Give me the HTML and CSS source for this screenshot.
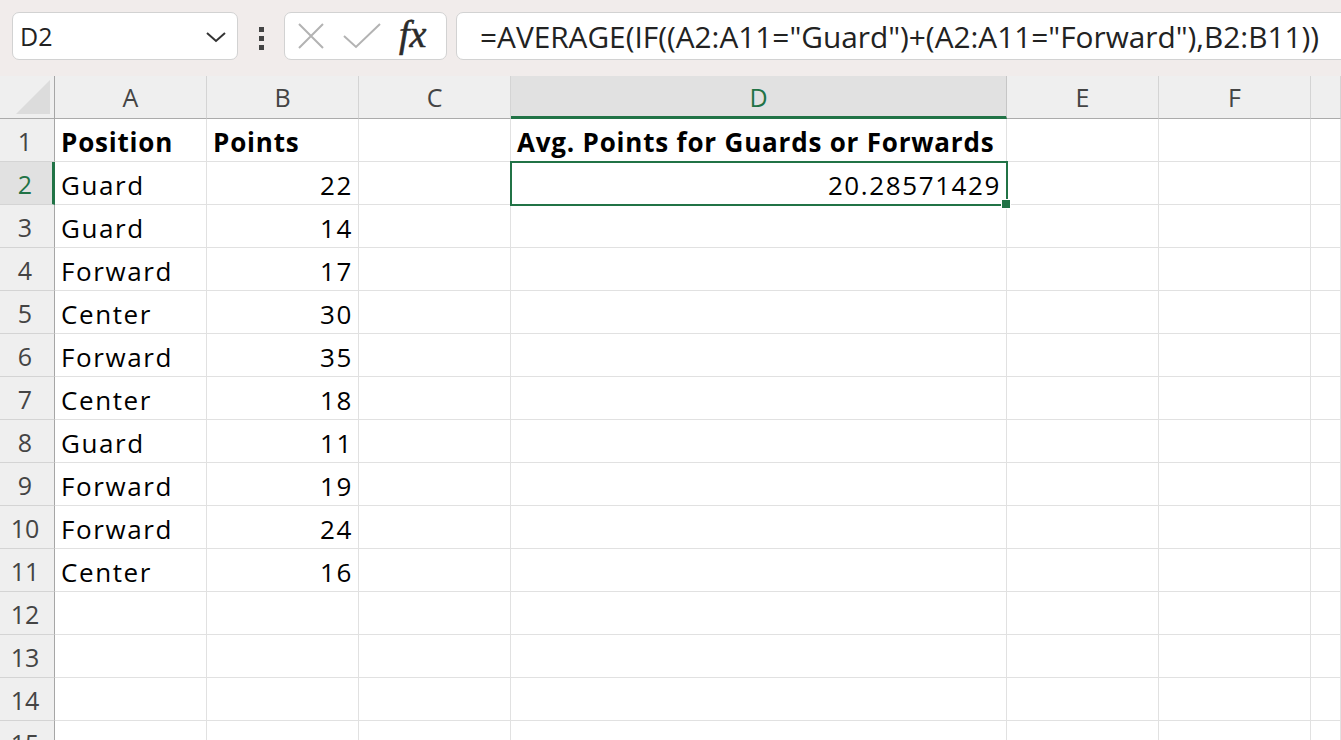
FILE: index.html
```html
<!DOCTYPE html>
<html lang="en">
<head>
    <meta charset="UTF-8">
    <meta name="viewport" content="width=device-width, initial-scale=1.0">
    <title>Book1 - Excel</title>
    <link rel="stylesheet" href="styles.css">
</head>
<body>
    <div class="toolbar">
        <div class="namebox">
            <span>D2</span>
            <svg class="chevron" width="22" height="12" viewBox="0 0 22 12">
                <path d="M2 2 L11 10 L20 2" fill="none" stroke="#333" stroke-width="2"/>
            </svg>
        </div>
        <div class="dots">
            <i></i><i></i><i></i>
        </div>
        <div class="fxbox">
            <svg width="28" height="26" viewBox="0 0 28 26">
                <path d="M2 1 L26 25 M26 1 L2 25" stroke="#b3b3b3" stroke-width="2" fill="none"/>
            </svg>
            <svg width="38" height="26" viewBox="0 0 38 26">
                <path d="M1 13 L13 24 L37 1" stroke="#b3b3b3" stroke-width="2" fill="none"/>
            </svg>
            <span class="fx">fx</span>
        </div>
        <div class="formula">=AVERAGE(IF((A2:A11="Guard")+(A2:A11="Forward"),B2:B11))</div>
    </div>

    <div class="sheet">
        <div class="corner"><span></span></div>
        <div class="colhead">A</div>
        <div class="colhead">B</div>
        <div class="colhead">C</div>
        <div class="colhead active">D</div>
        <div class="colhead">E</div>
        <div class="colhead">F</div>
        <div class="colhead"></div>
    </div>

    <script>
        const rows = [
            ['Position', 'Points', '', 'Avg. Points for Guards or Forwards'],
            ['Guard', 22, '', 20.28571429],
            ['Guard', 14], ['Forward', 17], ['Center', 30], ['Forward', 35],
            ['Center', 18], ['Guard', 11], ['Forward', 19], ['Forward', 24],
            ['Center', 16], [], [], [], []
        ];

        const sheet = document.querySelector('.sheet');

        rows.forEach((row, i) => {
            const head = document.createElement('div');
            head.classList.add('rowhead');
            if (i == 1) head.classList.add('active');
            head.textContent = i + 1;
            sheet.appendChild(head);

            for (let c = 0; c < 7; c++) {
                const cell = document.createElement('div');
                cell.classList.add('cell');
                const v = row[c];
                if (v !== undefined && v !== '') {
                    cell.textContent = v;
                    if (typeof v == 'number') cell.classList.add('num');
                }
                if (i == 0) cell.classList.add('bold');
                if (i == 1 && c == 3) {
                    cell.classList.add('selected');
                    const handle = document.createElement('span');
                    handle.classList.add('handle');
                    cell.appendChild(handle);
                }
                sheet.appendChild(cell);
            }
        });
    </script>
</body>
</html>
```

FILE: styles.css
```css
body {
    margin: 0;
    overflow: hidden;
    font-family: "Open Sans", "Noto Sans", sans-serif;
    color: #000;
}

.toolbar {
    height: 76px;
    background: #f1eceb;
    display: flex;
    align-items: flex-start;
    padding-top: 12px;
    box-sizing: border-box;

    .namebox,
    .fxbox,
    .formula {
        height: 48px;
        box-sizing: border-box;
        background: #fff;
        border: 1px solid #d2d2d2;
        border-radius: 7px;
        display: flex;
        align-items: center;
    }

    .namebox {
        margin-left: 12px;
        width: 226px;
        padding: 0 10px 0 7px;
        justify-content: space-between;
        font-size: 25px;
        color: #222;
    }

    .chevron {
        margin-top: 2px;
    }

    .dots {
        width: 46px;
        display: flex;
        flex-direction: column;
        align-items: center;
        gap: 4px;
        padding-top: 15px;

        i {
            width: 5px;
            height: 5px;
            background: #444;
        }
    }

    .fxbox {
        width: 163px;
        padding: 0 10px 0 12px;
        gap: 20px;

        svg:nth-child(2) {
            margin-left: -2px;
        }
    }

    .fx {
        font-family: "Liberation Serif", serif;
        font-style: italic;
        font-size: 38px;
        color: #2b2b2b;
        margin-left: -2px;
        margin-top: -5px;
        -webkit-text-stroke: 0.6px #2b2b2b;
    }

    .formula {
        margin-left: 9px;
        flex: 1;
        margin-right: -20px;
        padding-left: 23px;
        font-size: 29.8px;
        color: #222;
        white-space: nowrap;
    }
}

.sheet {
    display: grid;
    grid-template-columns: 55px 152px 152px 152px 496px 152px 152px 1fr;
    grid-auto-rows: 43px;

    > div {
        box-sizing: border-box;
        border-right: 1px solid #e1e1e1;
        border-bottom: 1px solid #e1e1e1;
    }

    .corner {
        background: #efefef;
        border-right: 1px solid #a6a6a6;
        border-bottom: 1px solid #ababab;
        position: relative;

        span {
            position: absolute;
            right: 4px;
            bottom: 4px;
            width: 0;
            height: 0;
            border-left: 34px solid transparent;
            border-bottom: 34px solid #dcdcdc;
        }
    }

    .colhead {
        background: #efefef;
        border-bottom: 1px solid #ababab;
        border-right: 1px solid #d4d4d4;
        text-align: center;
        font-size: 25px;
        line-height: 42px;
        color: #444;

        &.active {
            background: #e1e1e1;
            color: #217346;
            border-bottom: 3px solid #217346;
            border-right-color: #c6c6c6;
        }
    }

    .rowhead {
        background: #efefef;
        border-right: 1px solid #a6a6a6;
        border-bottom-color: #d4d4d4;
        text-align: center;
        font-size: 25px;
        line-height: 42px;
        padding-top: 1px;
        color: #444;
        padding-right: 4px;

        &.active {
            background: #e1e1e1;
            color: #217346;
            border-right: 3px solid #217346;
            padding-right: 2px;
        }
    }

    .cell {
        font-family: "Open Sans", "Noto Sans", sans-serif;
        font-size: 26px;
        letter-spacing: 1.6px;
        line-height: 42px;
        padding: 2px 5px 0 6px;
        white-space: nowrap;
        overflow: visible;

        &.num {
            text-align: right;
        }

        &.bold {
            font-weight: bold;
            letter-spacing: 0.8px;
        }

        &.selected {
            position: relative;
            outline: 2px solid #217346;
            outline-offset: -1px;
            z-index: 1;
        }
    }

    .handle {
        position: absolute;
        right: -5px;
        bottom: -5px;
        width: 8px;
        height: 8px;
        background: #217346;
        border: 1px solid #fff;
    }
}
```
